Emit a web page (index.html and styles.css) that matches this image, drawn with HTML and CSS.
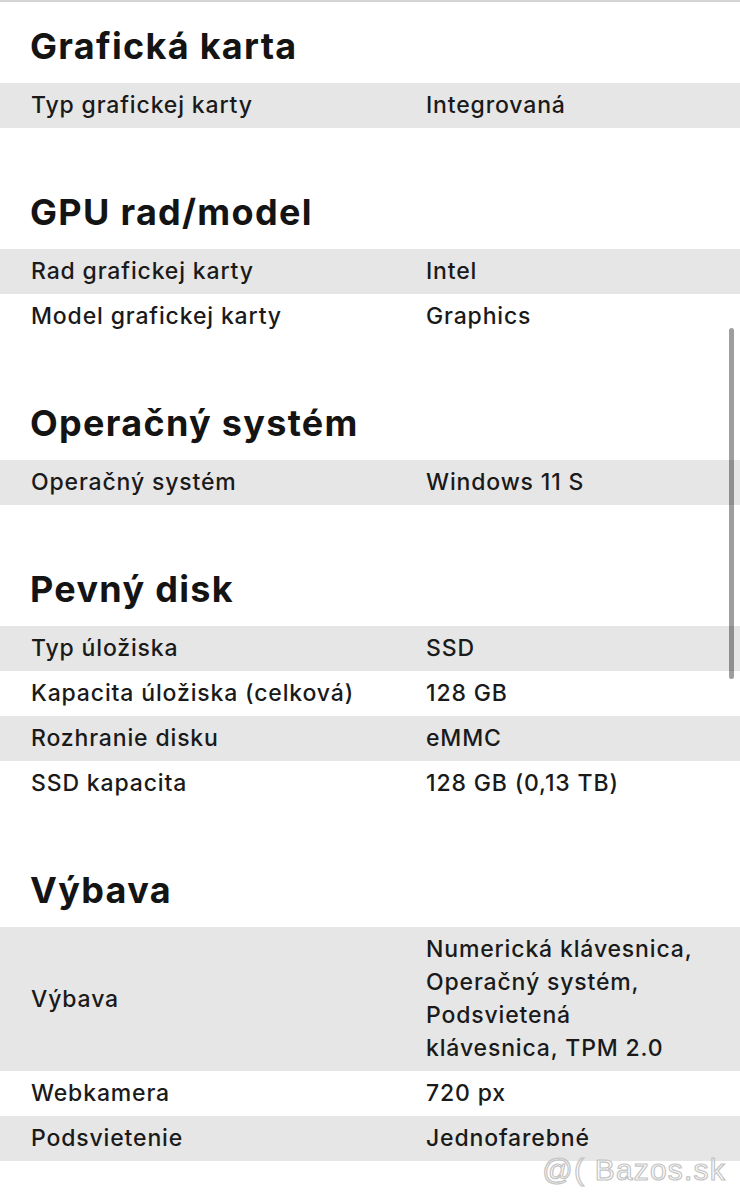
FILE: index.html
```html
<!DOCTYPE html>
<html lang="sk">
<head>
<meta charset="utf-8">
<link rel="stylesheet" href="styles.css">
</head>
<body>
<div class="page">
  <section class="spec">
    <h2 class="spec-title">Grafická karta</h2>
    <div class="spec-table">
      <div class="row"><div class="label">Typ grafickej karty</div><div class="value">Integrovaná</div></div>
    </div>
  </section>
  <section class="spec">
    <h2 class="spec-title">GPU rad/model</h2>
    <div class="spec-table">
      <div class="row"><div class="label">Rad grafickej karty</div><div class="value">Intel</div></div>
      <div class="row"><div class="label">Model grafickej karty</div><div class="value">Graphics</div></div>
    </div>
  </section>
  <section class="spec">
    <h2 class="spec-title">Operačný systém</h2>
    <div class="spec-table">
      <div class="row"><div class="label">Operačný systém</div><div class="value">Windows 11 S</div></div>
    </div>
  </section>
  <section class="spec">
    <h2 class="spec-title">Pevný disk</h2>
    <div class="spec-table">
      <div class="row"><div class="label">Typ úložiska</div><div class="value">SSD</div></div>
      <div class="row"><div class="label">Kapacita úložiska (celková)</div><div class="value">128 GB</div></div>
      <div class="row"><div class="label">Rozhranie disku</div><div class="value">eMMC</div></div>
      <div class="row"><div class="label">SSD kapacita</div><div class="value">128 GB (0,13 TB)</div></div>
    </div>
  </section>
  <section class="spec">
    <h2 class="spec-title">Výbava</h2>
    <div class="spec-table">
      <div class="row"><div class="label">Výbava</div><div class="value">Numerická klávesnica, Operačný systém, Podsvietená klávesnica, TPM 2.0</div></div>
      <div class="row"><div class="label">Webkamera</div><div class="value">720 px</div></div>
      <div class="row"><div class="label">Podsvietenie</div><div class="value">Jednofarebné</div></div>
    </div>
  </section>
</div>
<div class="scrollbar"></div>
<div class="watermark">@( Bazos.sk</div>
</body>
</html>
```
FILE: styles.css
```css
html, body {
  margin: 0;
  padding: 0;
  background: #ffffff;
}
body {
  font-family: Inter, "Noto Sans", "Liberation Sans", sans-serif;
  color: #1a1a1a;
  border-top: 2px solid #d4d4d4;
  min-height: 1198px;
  position: relative;
  overflow: hidden;
}
.page {
  padding-top: 22px;
  display: flex;
  flex-direction: column;
  gap: 62px;
}
.spec-title {
  margin: 0 0 14px 0;
  padding-left: 30px;
  font-size: 36px;
  line-height: 45px;
  font-weight: 700;
  letter-spacing: 1.3px;
  color: #141414;
}
.spec-table {
  display: flex;
  flex-direction: column;
}
.row {
  display: grid;
  grid-template-columns: 395px 1fr;
  align-items: center;
  padding: 6px 30px 6px 31px;
  font-size: 23px;
  line-height: 33px;
  font-weight: 500;
  letter-spacing: 0.85px;
}
.row:nth-child(odd) {
  background: #e6e6e6;
}
.scrollbar {
  position: absolute;
  left: 729px;
  top: 326px;
  width: 5px;
  height: 351px;
  border-radius: 3px;
  background: rgba(0, 0, 0, 0.38);
}
.watermark {
  position: absolute;
  right: 14px;
  bottom: 13px;
  font-family: "Liberation Sans", Arial, sans-serif;
  font-size: 30px;
  line-height: 34px;
  color: transparent;
  -webkit-text-stroke: 1.2px #c4c4c4;
  letter-spacing: 1.2px;
}
```
